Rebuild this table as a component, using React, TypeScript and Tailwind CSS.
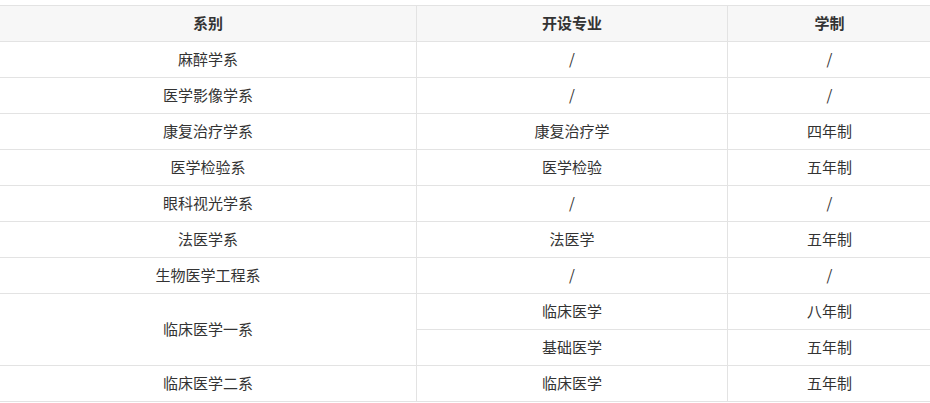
const rows: { dept: string; items: { major: string; years: string }[] }[] = [
  { dept: '麻醉学系', items: [{ major: '/', years: '/' }] },
  { dept: '医学影像学系', items: [{ major: '/', years: '/' }] },
  { dept: '康复治疗学系', items: [{ major: '康复治疗学', years: '四年制' }] },
  { dept: '医学检验系', items: [{ major: '医学检验', years: '五年制' }] },
  { dept: '眼科视光学系', items: [{ major: '/', years: '/' }] },
  { dept: '法医学系', items: [{ major: '法医学', years: '五年制' }] },
  { dept: '生物医学工程系', items: [{ major: '/', years: '/' }] },
  {
    dept: '临床医学一系',
    items: [
      { major: '临床医学', years: '八年制' },
      { major: '基础医学', years: '五年制' },
    ],
  },
  { dept: '临床医学二系', items: [{ major: '临床医学', years: '五年制' }] },
]

const cell = 'h-9 border border-[#e3e3e3] text-center align-middle p-0'

export default function App() {
  return (
    <div
      className="w-[930px] pt-[5px] bg-white text-[15px] text-[#333] overflow-hidden"
      style={{ fontFamily: '"Microsoft YaHei", "Noto Sans CJK SC", sans-serif' }}
    >
      <table className="w-[932px] -ml-px border-collapse table-fixed">
        <colgroup>
          <col className="w-[417px]" />
          <col className="w-[311px]" />
          <col className="w-[204px]" />
        </colgroup>
        <thead>
          <tr className="bg-[#f7f7f7]">
            <th className={`${cell} font-bold`}>系别</th>
            <th className={`${cell} font-bold`}>开设专业</th>
            <th className={`${cell} font-bold`}>学制</th>
          </tr>
        </thead>
        <tbody>
          {rows.map(r =>
            r.items.map((it, i) => (
              <tr key={r.dept + i}>
                {i === 0 && (
                  <td className={cell} rowSpan={r.items.length}>
                    {r.dept}
                  </td>
                )}
                <td className={cell}>{it.major}</td>
                <td className={cell}>{it.years}</td>
              </tr>
            ))
          )}
        </tbody>
      </table>
    </div>
  )
}
